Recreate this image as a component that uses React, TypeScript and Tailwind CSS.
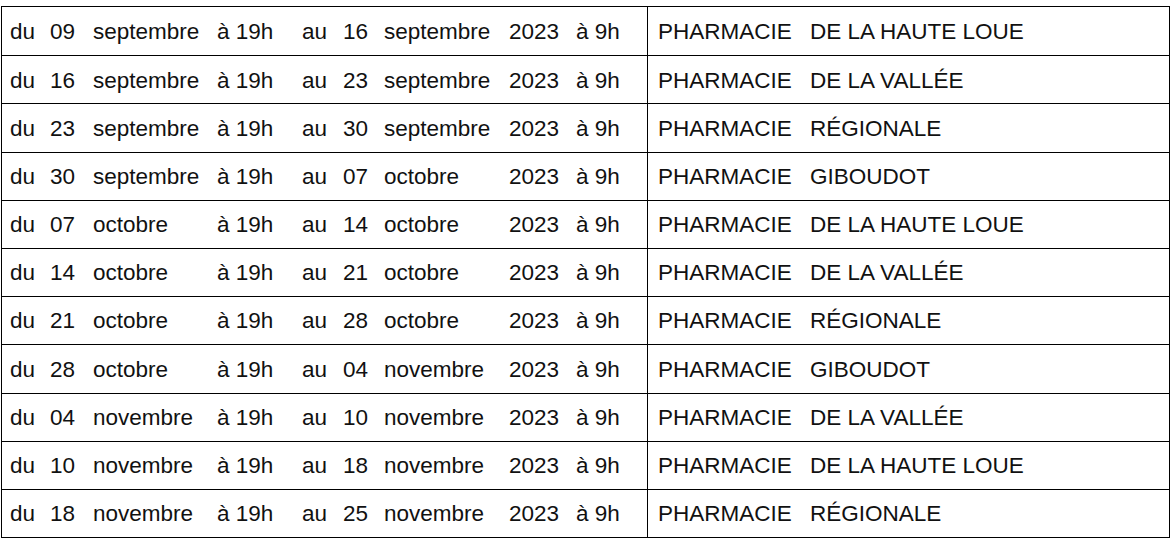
import React from 'react';

type Row = {
  d1: string;
  m1: string;
  d2: string;
  m2: string;
  pharma: string;
};

const rows: Row[] = [
  { d1: '09', m1: 'septembre', d2: '16', m2: 'septembre', pharma: 'DE LA HAUTE LOUE' },
  { d1: '16', m1: 'septembre', d2: '23', m2: 'septembre', pharma: 'DE LA VALLÉE' },
  { d1: '23', m1: 'septembre', d2: '30', m2: 'septembre', pharma: 'RÉGIONALE' },
  { d1: '30', m1: 'septembre', d2: '07', m2: 'octobre', pharma: 'GIBOUDOT' },
  { d1: '07', m1: 'octobre', d2: '14', m2: 'octobre', pharma: 'DE LA HAUTE LOUE' },
  { d1: '14', m1: 'octobre', d2: '21', m2: 'octobre', pharma: 'DE LA VALLÉE' },
  { d1: '21', m1: 'octobre', d2: '28', m2: 'octobre', pharma: 'RÉGIONALE' },
  { d1: '28', m1: 'octobre', d2: '04', m2: 'novembre', pharma: 'GIBOUDOT' },
  { d1: '04', m1: 'novembre', d2: '10', m2: 'novembre', pharma: 'DE LA VALLÉE' },
  { d1: '10', m1: 'novembre', d2: '18', m2: 'novembre', pharma: 'DE LA HAUTE LOUE' },
  { d1: '18', m1: 'novembre', d2: '25', m2: 'novembre', pharma: 'RÉGIONALE' },
];

const App = () => {
  return (
    <div
      className="w-[1176px] h-[542px] bg-white pt-[6px] pl-[1px] text-[#111] text-[22.5px] leading-none"
      style={{ fontFamily: '"Liberation Sans", Arial, sans-serif' }}
    >
      <div className="w-[1169px] border border-black">
        {rows.map((r, i) => (
          <div
            key={i}
            className={`flex h-[48.2px] items-center ${i > 0 ? 'border-t border-black' : ''}`}
          >
            <div className="grid h-full w-[645px] grid-cols-[40px_43px_124px_85px_41px_41px_125px_67px_1fr] items-center pl-[8px] pt-[2px] whitespace-nowrap">
              <span>du</span>
              <span>{r.d1}</span>
              <span>{r.m1}</span>
              <span>à 19h</span>
              <span>au</span>
              <span>{r.d2}</span>
              <span>{r.m2}</span>
              <span>2023</span>
              <span>à 9h</span>
            </div>
            <div className="grid h-full flex-1 grid-cols-[152px_1fr] items-center border-l border-black pl-[10px] pt-[2px] whitespace-nowrap">
              <span>PHARMACIE</span>
              <span>{r.pharma}</span>
            </div>
          </div>
        ))}
      </div>
    </div>
  );
};

export default App;
